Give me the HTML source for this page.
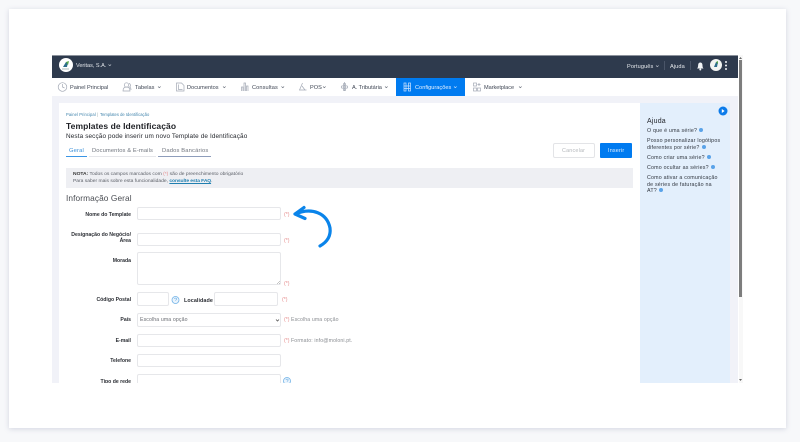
<!DOCTYPE html>
<html lang="pt"><head><meta charset="utf-8"><title>Templates de Identificação</title>
<style>
html,body{margin:0;padding:0;width:800px;height:442px;overflow:hidden;background:#f7f8fa}
#root{position:relative;width:800px;height:442px;overflow:hidden;font-family:"Liberation Sans",sans-serif;filter:blur(.35px)}
#root div,#root span.t{position:absolute}
.t{white-space:nowrap;line-height:8px;height:8px}
.n{font-size:5.6px;color:#3f4654;letter-spacing:.02px;top:84px}
.l{font-size:5.15px;color:#2c2f35;font-weight:bold;right:669px}
.i{background:#fff;border:1px solid #e6e7ea;border-radius:2px;box-sizing:border-box}
.r{font-size:5.2px;color:#e58a8a}
.g{font-size:5.2px;color:#8a8d92;letter-spacing:.05px}
.h{font-size:5.3px;color:#30363f;left:647px;letter-spacing:.2px}
.q{display:inline-block;width:4px;height:4px;border-radius:50%;background:#5aa3e8;margin-left:2px}
svg{position:absolute;overflow:visible}
</style></head><body>
<div id="root">
<div style="left:9px;top:9px;width:777px;height:419px;background:#fff;box-shadow:0 1px 5px rgba(120,125,160,.28)"></div>

<div style="left:52px;top:55px;width:686px;height:23px;background:#2e3a4d;border-top:1px solid #8c929c;box-sizing:border-box"></div>
<div style="left:52px;top:78px;width:686px;height:18px;background:#fff"></div>
<div style="left:52px;top:96px;width:686px;height:287px;background:#f1f2f8"></div>
<div style="left:59px;top:103px;width:581px;height:280px;background:#fff"></div>
<div style="left:640px;top:103px;width:90px;height:280px;background:#e3effc"></div>

<div style="left:739px;top:55px;width:4px;height:328px;background:#f8f8f8"></div>
<div style="left:739px;top:60px;width:3px;height:237px;background:#7d7d7d"></div>
<svg style="left:0;top:0" width="800" height="442"><path d="M739 59l1.500-2 1.500 2zM739 379l1.500 2 1.500-2z" fill="#666"/></svg>

<div style="left:59px;top:58px;width:14px;height:14px;border-radius:50%;background:#fff"></div>
<svg style="left:0;top:0" width="800" height="442"><path d="M63 67l3-5h2l-1 5z" fill="#2c6d8a"/><path d="M66 62l3-1-1 4z" fill="#5aa84a"/><path d="M62 69h7" stroke="#9aa" stroke-width=".8"/></svg>
<span class="t" style="left:76px;top:61.500px;font-size:5.500px;color:#e2e5ea">Veritas, S.A.</span>
<span class="t" style="left:627px;top:62.500px;font-size:5.600px;color:#e6e9ed;letter-spacing:.1px">Português</span>
<span class="t" style="left:670px;top:62.500px;font-size:5.600px;color:#e6e9ed;letter-spacing:.1px">Ajuda</span>
<div style="left:664px;top:61px;width:1px;height:9px;background:#4a5568"></div>
<div style="left:690px;top:61px;width:1px;height:9px;background:#4a5568"></div>
<div style="left:710px;top:59px;width:12px;height:12px;border-radius:50%;background:#f2f4f2"></div>
<svg style="left:0;top:0" width="800" height="442">
<path d="M714 67l2-5h2l-1 5z" fill="#2c6d8a"/><path d="M716 62l2-1v3z" fill="#5aa84a"/>
<path d="M697 68.500c1.200-1 1-2.200 1.200-4 .3-2.600 3.900-2.600 4.200 0 .2 1.800 0 3 1.200 4z" fill="#f2f4f6"/><circle cx="700.300" cy="69.500" r="1" fill="#f2f4f6"/>
<g fill="#f2f4f6"><circle cx="726" cy="62" r="1"/><circle cx="726" cy="65.500" r="1"/><circle cx="726" cy="69" r="1"/></g>
<g fill="none" stroke="#c9ced6" stroke-width=".6"><path d="M108.500 64.500l1.300 1.200 1.300-1.200M656 65.500l1.300 1.200 1.300-1.200"/></g>
<g fill="none" stroke="#5c6370" stroke-width=".6"><path d="M158 86.500l1.300 1.200 1.300-1.200M223 86.500l1.300 1.200 1.300-1.200M281.500 86.500l1.300 1.200 1.300-1.200M323 86.500l1.300 1.200 1.300-1.200M385 86.500l1.300 1.200 1.300-1.200M519 86.500l1.300 1.200 1.300-1.200"/></g>
</svg>

<span class="t n" style="left:70px;letter-spacing:-.02px">Painel Principal</span>
<span class="t n" style="left:135px">Tabelas</span>
<span class="t n" style="left:187px">Documentos</span>
<span class="t n" style="left:252px;letter-spacing:.12px">Consultas</span>
<span class="t n" style="left:310px">POS</span>
<span class="t n" style="left:352px;letter-spacing:-.02px">A. Tributária</span>
<div style="left:396px;top:78px;width:69px;height:18px;background:#007bf0"></div>
<span class="t n" style="left:415px;color:#e6f2ff;letter-spacing:.02px">Configurações</span>
<span class="t n" style="left:484px;letter-spacing:-.04px">Marketplace</span>
<svg style="left:0;top:0" width="800" height="442">
<g fill="none" stroke="#a3a9b5" stroke-width=".7">
<circle cx="62.500" cy="87" r="4.300"/><path d="M62.500 84v3l2 1"/>
<circle cx="126.500" cy="85" r="2.200"/><path d="M123 91c0-3 1.500-4 3.500-4s3.500 1 3.500 4z"/><path d="M129 83.500c1.500 0 2 3 .5 3.500M131 90c0-1.500-.5-2.500-1.500-3"/>
<path d="M176.500 83h5l2.500 2.500v5.500h-7.500z"/><path d="M178.500 84.500v5h4"/>
<path d="M241.500 91v-4h1.500v4M244 91v-8h1.500v8M246.500 91v-5h1.500v5"/>
<path d="M302.500 83l-3 7h7M302 86l3 4"/>
<circle cx="344.500" cy="84.500" r="1.200"/><circle cx="344.500" cy="89.500" r="1.200"/><circle cx="342.500" cy="87" r="1.200"/><circle cx="346.500" cy="87" r="1.200"/><path d="M344.500 82v9"/>
<rect x="473.500" y="83" width="3" height="3"/><path d="M479 83v3M477.500 84.500h3"/><rect x="473.500" y="88" width="3" height="3"/><rect x="477.500" y="88" width="3" height="3"/>
</g>
<g fill="none" stroke="#cfe5ff" stroke-width=".7"><rect x="404" y="83" width="2" height="8"/><rect x="408.500" y="83" width="2" height="8"/><path d="M404 86h6.500M404 88.500h6.500"/></g>
<path d="M454 86.500l1.300 1.200 1.300-1.200" fill="none" stroke="#dcecff" stroke-width=".6"/>
</svg>

<span class="t" style="left:66px;top:111px;font-size:4.100px;color:#3f83ab;letter-spacing:.1px">Painel Principal</span>
<span class="t" style="left:97px;top:111px;font-size:4.100px;color:#9aa">|</span>
<span class="t" style="left:100px;top:111px;font-size:4.100px;color:#3f83ab;letter-spacing:.03px">Templates de Identificação</span>
<span class="t" style="left:66px;top:122px;font-size:8.500px;color:#1d1f24;font-weight:bold;letter-spacing:.08px">Templates de Identificação</span>
<span class="t" style="left:66px;top:133px;font-size:6.400px;color:#25282e;letter-spacing:.12px">Nesta secção pode inserir um novo Template de Identificação</span>
<span class="t" style="left:69px;top:147px;font-size:5.800px;color:#3a8fd8;letter-spacing:.15px">Geral</span>
<span class="t" style="left:92px;top:147px;font-size:5.800px;color:#70757e;letter-spacing:.1px">Documentos &amp; E-mails</span>
<span class="t" style="left:162px;top:147px;font-size:5.800px;color:#70757e;letter-spacing:.15px">Dados Bancários</span>
<div style="left:66px;top:155.500px;width:21px;height:1px;background:#3a95e5"></div>
<div style="left:89px;top:155.500px;width:67px;height:1px;background:#e5e6ea"></div>
<div style="left:158px;top:155.500px;width:53px;height:1px;background:#8e9dbb"></div>

<div style="left:553px;top:143px;width:42px;height:15px;background:#fff;border:1px solid #e3e4e7;border-radius:2px;box-sizing:border-box"></div>
<span class="t" style="left:562px;top:146.500px;font-size:5.400px;color:#b5b8bc;letter-spacing:.2px">Cancelar</span>
<div style="left:600px;top:143px;width:32px;height:15px;background:#007bf0;border-radius:1px"></div>
<span class="t" style="left:608px;top:146.500px;font-size:5.400px;color:#e2f0ff;letter-spacing:.2px">Inserir</span>

<div style="left:66px;top:168px;width:567px;height:20px;background:#eeeff3"></div>
<span class="t" style="left:73px;top:170.500px;font-size:4.950px;color:#5a5e66"><b style="color:#333">NOTA:</b> Todos os campos marcados com <span style="color:#e58a8a">(*)</span> são de preenchimento obrigatório</span>
<span class="t" style="left:73px;top:177.500px;font-size:4.950px;color:#5a5e66">Para saber mais sobre esta funcionalidade, <b style="color:#1f7fb0;text-decoration:underline;font-weight:bold;letter-spacing:-.08px">consulte esta FAQ</b>.</span>

<span class="t" style="left:66px;top:194px;font-size:8.300px;color:#4a4d53;letter-spacing:.1px">Informação Geral</span>

<span class="t l" style="top:211px">Nome do Template</span>
<div class="i" style="left:137px;top:207px;width:144px;height:13px"></div>
<span class="t r" style="left:284px;top:211px">(*)</span>

<span class="t l" style="top:231px">Designação do Negócio/</span>
<span class="t l" style="top:237px">Área</span>
<div class="i" style="left:137px;top:233px;width:144px;height:13px"></div>
<span class="t r" style="left:284px;top:237px">(*)</span>

<span class="t l" style="top:257px">Morada</span>
<div class="i" style="left:137px;top:252px;width:144px;height:33px"></div>
<svg style="left:0;top:0" width="800" height="442"><path d="M277 284l3-3M279 284l1-1" stroke="#888" stroke-width=".5"/></svg>
<span class="t r" style="left:284px;top:280px">(*)</span>

<span class="t l" style="top:296px">Código Postal</span>
<div class="i" style="left:137px;top:292px;width:32px;height:14px"></div>
<svg style="left:0;top:0" width="800" height="442"><circle cx="175.500" cy="300" r="3.500" fill="#eaf4fd" stroke="#6fb1e6" stroke-width=".8"/><path d="M174.500 299c0-1.300 2.200-1.300 2.200 0 0 .8-1.100.8-1.100 1.800" fill="none" stroke="#6fb1e6" stroke-width=".6"/></svg>
<span class="t" style="left:184px;top:297px;font-size:5.400px;font-weight:bold;color:#2c2f35;letter-spacing:.08px">Localidade</span>
<div class="i" style="left:214px;top:292px;width:64px;height:14px"></div>
<span class="t r" style="left:282px;top:296px">(*)</span>

<span class="t l" style="top:316px">País</span>
<div class="i" style="left:137px;top:313px;width:144px;height:14px"></div>
<span class="t g" style="left:140px;top:316px;color:#6a6d73;letter-spacing:.12px">Escolha uma opção</span>
<svg style="left:0;top:0" width="800" height="442"><path d="M276 319.500l1.500 1.500 1.500-1.500" fill="none" stroke="#555" stroke-width=".8"/></svg>
<span class="t r" style="left:284px;top:316px">(*)</span>
<span class="t g" style="left:291px;top:316px;letter-spacing:.12px">Escolha uma opção</span>

<span class="t l" style="top:337px">E-mail</span>
<div class="i" style="left:137px;top:334px;width:144px;height:13px"></div>
<span class="t r" style="left:284px;top:337px">(*)</span>
<span class="t g" style="left:291px;top:337px;letter-spacing:.13px">Formato: info@moloni.pt.</span>

<span class="t l" style="top:357px">Telefone</span>
<div class="i" style="left:137px;top:354px;width:144px;height:13px"></div>

<span class="t l" style="top:378px">Tipo de rede</span>
<div class="i" style="left:137px;top:374px;width:144px;height:13px"></div>
<svg style="left:0;top:0" width="800" height="442"><circle cx="287" cy="381" r="3.500" fill="#eaf4fd" stroke="#6fb1e6" stroke-width=".8"/><path d="M286 380c0-1.300 2.200-1.300 2.200 0 0 .8-1.100.8-1.100 1.800" fill="none" stroke="#6fb1e6" stroke-width=".6"/></svg>
<div style="left:59px;top:383px;width:581px;height:12px;background:#fff"></div>

<svg style="left:0;top:0" width="800" height="442"><circle cx="723" cy="111" r="4.500" fill="#0b7bea"/><path d="M721.800 109l2.800 2-2.800 2z" fill="#fff"/>
<path d="M295 214C312 207 327 213 330 228C331 236 327 242 320 246M295 214L304 207.500M295 214L305 218.500" fill="none" stroke="#0a84ea" stroke-width="3.200" stroke-linecap="round" stroke-linejoin="round"/></svg>

<span class="t" style="left:647px;top:118px;font-size:7px;color:#25282e;letter-spacing:.2px">Ajuda</span>
<span class="t h" style="top:126.500px">O que é uma série?<span class="q"></span></span>
<span class="t h" style="top:136.500px">Posso personalizar logótipos</span>
<span class="t h" style="top:143.500px">diferentes por série?<span class="q"></span></span>
<span class="t h" style="top:153.500px">Como criar uma série?<span class="q"></span></span>
<span class="t h" style="top:163.500px">Como ocultar as séries?<span class="q"></span></span>
<span class="t h" style="top:173.500px">Como ativar a comunicação</span>
<span class="t h" style="top:180.500px">de séries de faturação na</span>
<span class="t h" style="top:186.500px">AT?<span class="q"></span></span>
</div>
</body></html>
